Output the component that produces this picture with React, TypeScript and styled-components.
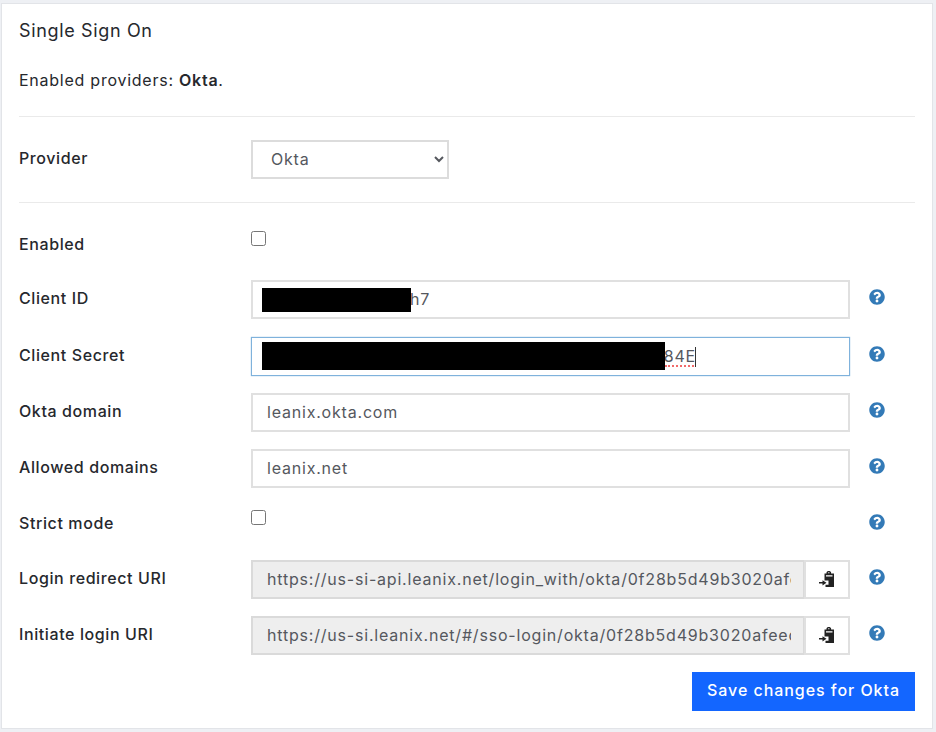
import { createGlobalStyle } from "styled-components";
import styled from "styled-components";
import { FaQuestionCircle } from "react-icons/fa";

const GlobalStyle = createGlobalStyle`
  html, body {
    margin: 0;
    background: #eef0f4;
  }
  * {
    box-sizing: border-box;
  }
`;

const Panel = styled.div`
  width: 932px;
  height: 726px;
  margin: 3px 0 0 1px;
  padding: 16px 17px 0 17px;
  background: #fff;
  border: 1px solid #e2e4e8;
  font-family: Inter, "Liberation Sans", sans-serif;
  color: #26282d;
`;

const Title = styled.h3`
  margin: 0;
  height: 22px;
  font-size: 18px;
  line-height: 22px;
  font-weight: 400;
  letter-spacing: 0.65px;
`;

const Intro = styled.p`
  margin: 27px 0 0;
  font-size: 16px;
  line-height: 22px;
  letter-spacing: 0.75px;
  b {
    font-weight: 600;
  }
`;

const Rule = styled.hr<{ $top: number }>`
  margin: ${(p) => p.$top}px 0 0;
  border: 0;
  border-top: 1px solid #eaeaea;
`;

const Row = styled.div<{ $gap?: number; $height?: number }>`
  display: flex;
  align-items: flex-start;
  height: ${(p) => p.$height ?? 39}px;
  margin-top: ${(p) => p.$gap ?? 17}px;
`;

const Label = styled.label<{ $lineHeight?: number }>`
  width: 232px;
  flex: none;
  font-size: 16px;
  font-weight: 500;
  letter-spacing: 0.6px;
  line-height: ${(p) => p.$lineHeight ?? 36}px;
`;

const Field = styled.div`
  position: relative;
  width: 599px;
  flex: none;
  display: flex;
`;

const TextInput = styled.input<{ $focused?: boolean; $indent?: number }>`
  width: 100%;
  min-width: 0;
  height: 39px;
  padding: 0 12px 2px ${(p) => p.$indent ?? 14}px;
  border: ${(p) => (p.$focused ? "1px solid #7fb2dc" : "2px solid #e0e0e0")};
  box-shadow: ${(p) => (p.$focused ? "0 0 1px #7fb2dc" : "none")};
  border-radius: 0;
  outline: none;
  background: #fff;
  font-family: inherit;
  font-size: 16px;
  letter-spacing: 0.8px;
  color: #55585e;
  &:read-only {
    background: #eeeeee;
    border-color: #dadada;
  }
`;

const Select = styled.select`
  width: 198px;
  height: 39px;
  padding: 0 14px 2px;
  border: 2px solid #dcdcdc;
  border-radius: 0;
  background: #fff;
  font-family: inherit;
  font-size: 16px;
  letter-spacing: 0.8px;
  color: #55585e;
`;

const Check = styled.input<{ $top?: number }>`
  width: 15px;
  height: 15px;
  margin: ${(p) => p.$top ?? 0}px 0 0 0;
  accent-color: #337ab7;
`;

const Redaction = styled.span<{ $width: number; $top: number; $height: number }>`
  position: absolute;
  left: 11px;
  top: ${(p) => p.$top}px;
  width: ${(p) => p.$width}px;
  height: ${(p) => p.$height}px;
  background: #000;
`;

const Squiggle = styled.span`
  position: absolute;
  left: 414px;
  top: 28px;
  width: 29px;
  border-top: 2px dotted #f26a6a;
`;

const Caret = styled.span`
  position: absolute;
  left: 444px;
  top: 10px;
  width: 1px;
  height: 20px;
  background: #333;
`;

const CopyButton = styled.button`
  width: 46px;
  height: 39px;
  flex: none;
  margin-left: -1px;
  padding: 0 1px 1px 0;
  display: flex;
  align-items: center;
  justify-content: center;
  background: #fff;
  border: 2px solid #e0e0e0;
`;

const Help = styled.span`
  margin-left: 19px;
  margin-top: 9px;
  width: 16px;
  height: 16px;
  display: flex;
  color: #337ab7;
  font-size: 16px;
`;

const Footer = styled.div`
  display: flex;
  justify-content: flex-end;
  margin-top: 17px;
`;

const SaveButton = styled.button`
  width: 223px;
  height: 39px;
  padding: 0 0 3px;
  border: 0;
  background: #1366ff;
  color: #fff;
  font-family: inherit;
  font-size: 16px;
  font-weight: 500;
  letter-spacing: 0.95px;
`;

function PasteIcon() {
  return (
    <svg width="16" height="16" viewBox="0 0 16 16" aria-hidden="true">
      <path
        fill="#222"
        d="M5.500 2.500H7.500V1.500C7.500 .6 8.600 0 9.800 0s2.300.6 2.300 1.500V2.500H15V16H6.500V13.800H9.500V9.500H5.500z"
      />
      <path fill="#fff" d="M9.200 1.300h1.200v1h-1.200zM7 4.300h6.500v1.200H7z" />
      <path fill="#222" d="M0 11h3.500V9.200L7.500 11.800 3.500 14.400V12.600H0z" />
    </svg>
  );
}

const fields = [
  { label: "Okta domain", value: "leanix.okta.com" },
  { label: "Allowed domains", value: "leanix.net" },
];

const uris = [
  {
    label: "Login redirect URI",
    value: "https://us-si-api.leanix.net/login_with/okta/0f28b5d49b3020afeed17c",
  },
  {
    label: "Initiate login URI",
    value: "https://us-si.leanix.net/#/sso-login/okta/0f28b5d49b3020afeed17c",
  },
];

export default function App() {
  return (
    <>
      <GlobalStyle />
      <Panel>
        <Title>Single Sign On</Title>
        <Intro>
          Enabled providers: <b>Okta</b>.
        </Intro>
        <Rule $top={25} />
        <Row $gap={23}>
          <Label>Provider</Label>
          <Select defaultValue="Okta">
            <option>Okta</option>
          </Select>
        </Row>
        <Rule $top={23} />
        <Row $gap={28} $height={32}>
          <Label $lineHeight={26}>Enabled</Label>
          <Check type="checkbox" />
        </Row>
        <Row $gap={17}>
          <Label>Client ID</Label>
          <Field>
            <TextInput $indent={157} defaultValue="h7" />
            <Redaction $width={149} $top={8} $height={24} />
          </Field>
          <Help>
            <FaQuestionCircle />
          </Help>
        </Row>
        <Row $gap={18}>
          <Label>Client Secret</Label>
          <Field>
            <TextInput $focused $indent={405} defaultValue="f84E" />
            <Redaction $width={403} $top={5} $height={28} />
            <Squiggle />
            <Caret />
          </Field>
          <Help>
            <FaQuestionCircle />
          </Help>
        </Row>
        {fields.map((f) => (
          <Row key={f.label}>
            <Label>{f.label}</Label>
            <Field>
              <TextInput defaultValue={f.value} />
            </Field>
            <Help>
              <FaQuestionCircle />
            </Help>
          </Row>
        ))}
        <Row $gap={17}>
          <Label>Strict mode</Label>
          <Field>
            <Check type="checkbox" $top={5} />
          </Field>
          <Help>
            <FaQuestionCircle />
          </Help>
        </Row>
        {uris.map((u, i) => (
          <Row key={u.label} $gap={i === 0 ? 16 : 17}>
            <Label>{u.label}</Label>
            <Field>
              <TextInput readOnly value={u.value} />
              <CopyButton type="button">
                <PasteIcon />
              </CopyButton>
            </Field>
            <Help>
              <FaQuestionCircle />
            </Help>
          </Row>
        ))}
        <Footer>
          <SaveButton type="button">Save changes for Okta</SaveButton>
        </Footer>
      </Panel>
    </>
  );
}
